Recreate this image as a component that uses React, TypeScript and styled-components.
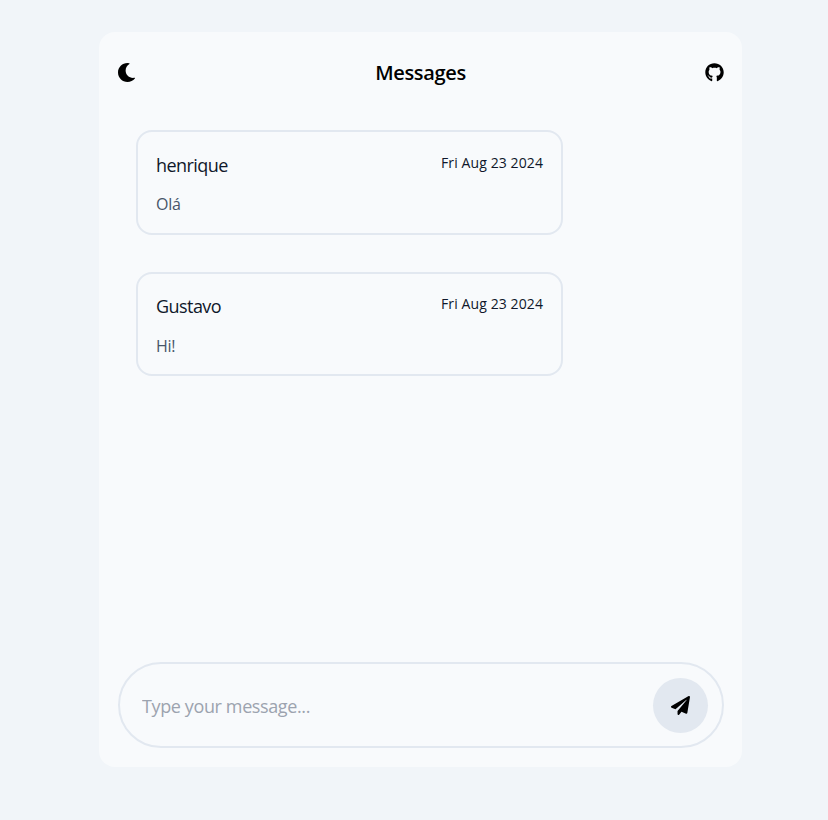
import React from "react"
import styled, { createGlobalStyle } from "styled-components"
import { FaMoon, FaGithub, FaPaperPlane } from "react-icons/fa"

const GlobalStyle = createGlobalStyle`
    * { box-sizing: border-box; }
    body {
        margin: 0;
        background: #f1f5f9;
        font-family: "Open Sans", "Noto Sans", sans-serif;
    }
`

const messages = [
    { author: "henrique", date: "Fri Aug 23 2024", text: "Olá" },
    { author: "Gustavo", date: "Fri Aug 23 2024", text: "Hi!" },
]

export default function App() {
    return (
        <Page>
            <GlobalStyle />
            <Panel>
                <Header>
                    <IconButton><FaMoon size={19} /></IconButton>
                    <Title>Messages</Title>
                    <IconButton><FaGithub size={19} /></IconButton>
                </Header>
                <MessageList>
                    {messages.map(x => (
                        <Card key={x.author}>
                            <CardTop>
                                <Author>{x.author}</Author>
                                <Date>{x.date}</Date>
                            </CardTop>
                            <Body>{x.text}</Body>
                        </Card>
                    ))}
                </MessageList>
                <Composer>
                    <Input placeholder="Type your message..." />
                    <SendButton><FaPaperPlane size={19} /></SendButton>
                </Composer>
            </Panel>
        </Page>
    )
}

const Page = styled.div`
    height: 820px;
    padding: 32px 0 0 99px;
    display: flex;
    align-items: flex-start;
`

const Panel = styled.main`
    width: 643px;
    height: 735px;
    padding: 19px 18px 19px 19px;
    background: #f8fafc;
    border-radius: 16px;
    display: flex;
    flex-direction: column;
`

const Header = styled.header`
    height: 42px;
    margin-left: -1px;
    display: flex;
    align-items: center;
    justify-content: space-between;
`

const IconButton = styled.span`
    display: flex;
    color: #000;
`

const Title = styled.h1`
    margin: 0;
    font-size: 20px;
    font-weight: 600;
    letter-spacing: -0.35px;
    color: #000;
`

const MessageList = styled.section`
    flex: 1;
    padding: 37px 18px 0;
    display: flex;
    flex-direction: column;
    gap: 37px;
`

const Card = styled.article`
    width: 427px;
    height: 104.6px;
    padding: 18.8px 18px;
    border: 2px solid #e2e8f0;
    border-radius: 16px;
`

const CardTop = styled.div`
    display: flex;
    justify-content: space-between;
    align-items: flex-start;
`

const Author = styled.span`
    font-size: 18px;
    line-height: 28px;
    letter-spacing: -0.55px;
    color: #0f172a;
`

const Date = styled.span`
    font-size: 14px;
    line-height: 20px;
    margin: 1.8px 0 0;
    letter-spacing: 0.1px;
    color: #0f172a;
`

const Body = styled.p`
    margin: 13.5px 0 0;
    font-size: 16px;
    line-height: 24px;
    letter-spacing: -0.3px;
    color: #475569;
`

const Composer = styled.form`
    width: 605.5px;
    height: 86px;
    padding: 0 14px 0 22px;
    border: 2px solid #e2e8f0;
    border-radius: 43px;
    display: flex;
    align-items: center;
`

const Input = styled.input`
    flex: 1;
    border: 0;
    outline: 0;
    padding: 2px 0 0;
    background: transparent;
    font-family: inherit;
    font-size: 18px;
    letter-spacing: -0.38px;
    color: #0f172a;
    &::placeholder { color: #9ca3af; opacity: 1; }
`

const SendButton = styled.button`
    width: 55px;
    height: 55px;
    border: 0;
    border-radius: 50%;
    background: #e2e8f0;
    color: #000;
    display: flex;
    align-items: center;
    justify-content: center;
`
